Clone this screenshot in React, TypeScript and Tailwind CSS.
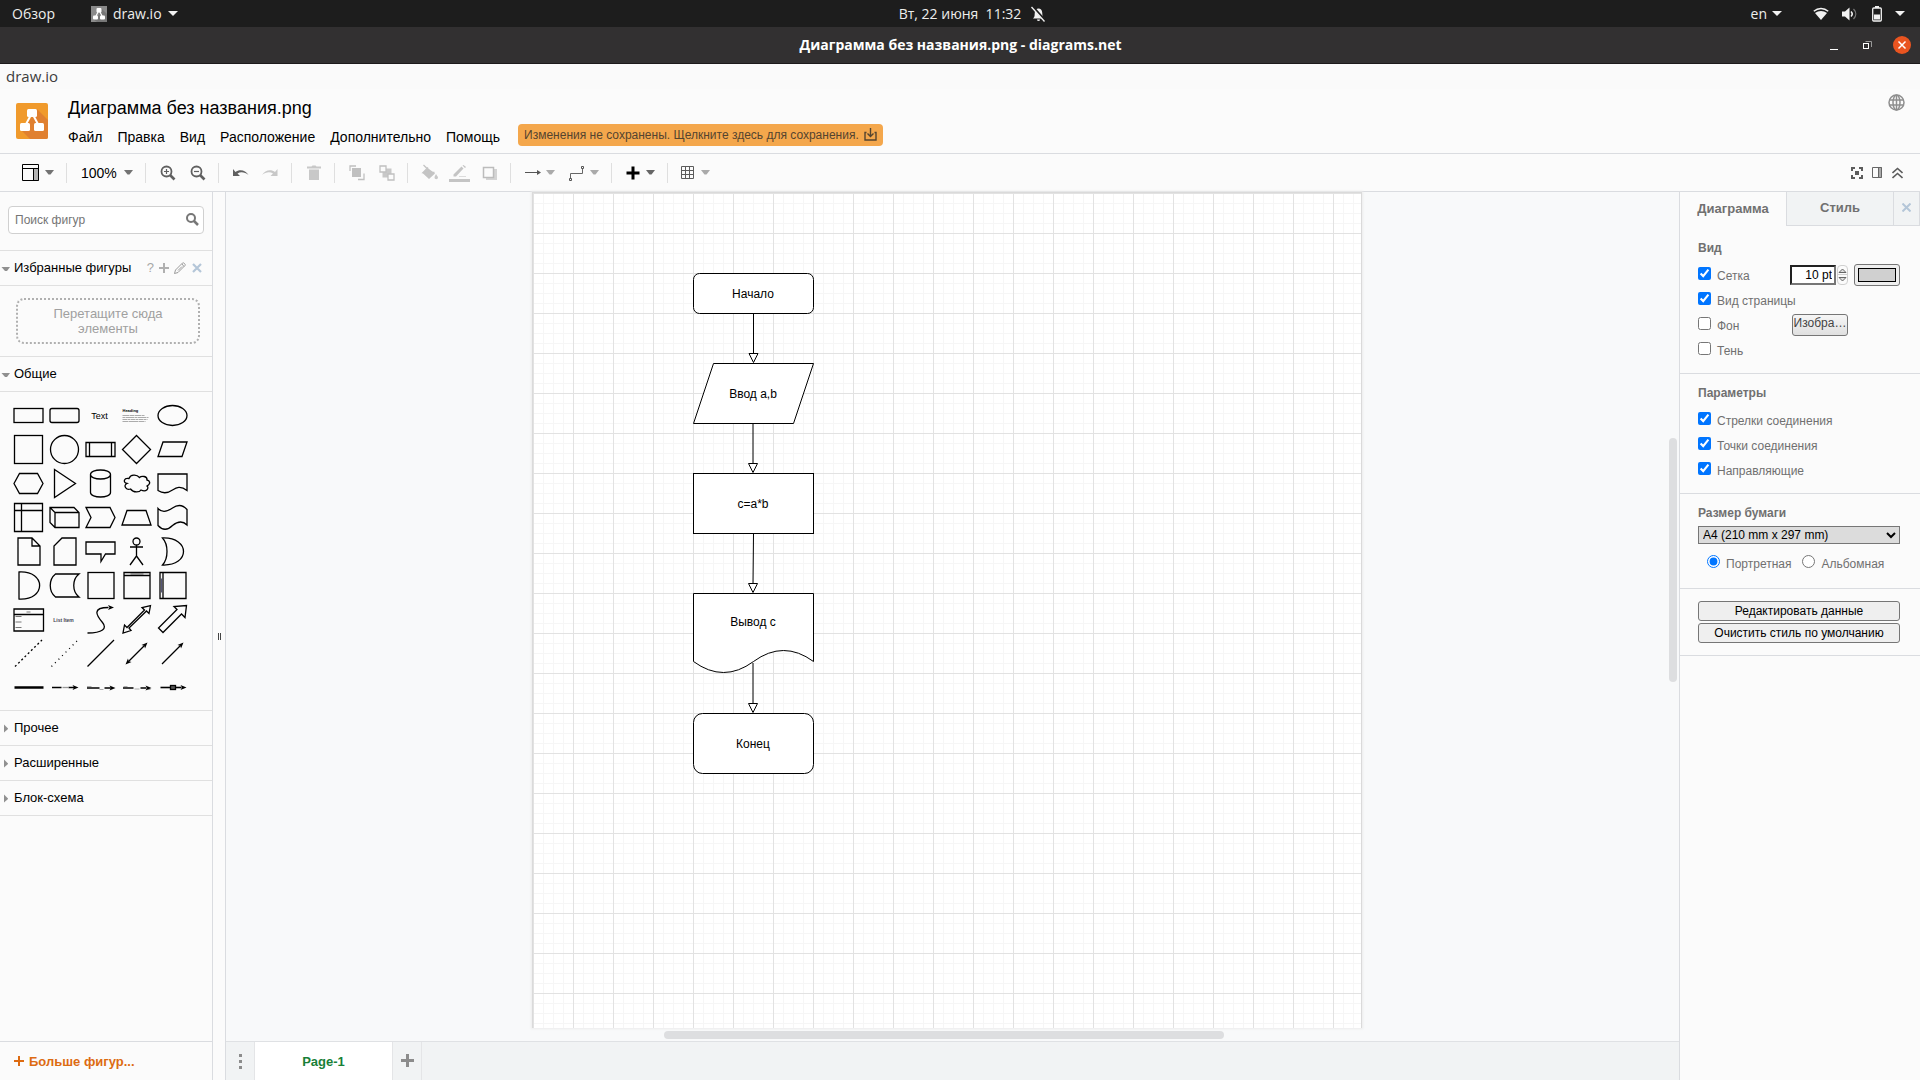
import type { ReactNode } from 'react';

const systemFont = "font-['Open_Sans','Noto_Sans',sans-serif]";

function Caret({ className = 'text-[#737373]' }: { className?: string }) {
  return (
    <svg width="9" height="5" viewBox="0 0 9 5" className={`shrink-0 ${className}`}>
      <path d="M0 0H9L5.5 4.5H3.5Z" fill="currentColor" />
    </svg>
  );
}

function TopCaret() {
  return (
    <svg width="10" height="5" viewBox="0 0 10 5">
      <path d="M0 0H10L5 5Z" fill="#f2f2f2" />
    </svg>
  );
}

function TopBar() {
  return (
    <header className={`flex h-[27px] shrink-0 items-center bg-[#1d1d1d] text-sm text-[#eeeeec] ${systemFont}`}>
      <div className="flex flex-1 items-center px-3">
        <button className="w-[79px] text-left">Обзор</button>
        <button className="flex items-center">
          <svg width="16" height="16" viewBox="0 0 16 16" className="mr-1.5">
            <rect width="16" height="16" fill="#8a8a8a" />
            <path d="M10 2L16 8V16H6L2 13L8 9Z" fill="#777" />
            <path d="M8 4L4 12M8 4L12 12" stroke="#fff" strokeWidth="1.2" />
            <rect x="5.5" y="2" width="5" height="4.5" rx="1" fill="#fff" />
            <rect x="2" y="9.5" width="5" height="4" rx="1" fill="#fff" />
            <rect x="9" y="9.5" width="5" height="4" rx="1" fill="#fff" />
          </svg>
          <span className="mr-1.5">draw.io</span>
          <TopCaret />
        </button>
      </div>
      <button className="flex items-center pl-[25px]">
        <span className="whitespace-pre">Вт, 22 июня  11:32</span>
        <svg width="15" height="16" viewBox="0 0 15 16" className="ml-2.5">
          <path d="M2 12.5C4 11 3.5 9 3.8 6.5C4 4 5.5 2.5 7.5 2.5S11 4 11.2 6.500C11.500 9 11 11 13 12.500ZM6 13.500H9A1.500 1.500 0 0 1 6 13.500Z" fill="#f2f2f2" />
          <path d="M1.500 0.500L14.500 15" stroke="#1d1d1d" strokeWidth="2.500" />
          <path d="M0.500 1L13.500 15.500" stroke="#f2f2f2" strokeWidth="1.300" />
        </svg>
      </button>
      <div className="flex flex-1 items-center justify-end pr-[15px] pl-[9px]">
        <button className="mr-[31px] flex items-center gap-[5px]">
          en
          <TopCaret />
        </button>
        <button className="flex items-center" aria-label="Система">
          <svg width="16" height="14" viewBox="0 0 16 14" className="mr-[13px]">
            <path d="M0.800 4.200C5 0.500 11 0.500 15.200 4.200" stroke="#f2f2f2" strokeWidth="1.500" fill="none" />
            <path d="M2 6C5.500 3.200 10.500 3.200 14 6L8 13Z" fill="#f2f2f2" />
          </svg>
          <svg width="15" height="14" viewBox="0 0 15 14" className="mr-[15px]">
            <path d="M0 4.500H3L7.500 0.500V13.500L3 9.500H0Z" fill="#f2f2f2" />
            <path d="M9 4.500C10.500 6 10.500 8 9 9.500" stroke="#f2f2f2" strokeWidth="1.500" fill="none" />
            <path d="M11.500 2C14.500 5 14.500 9 11.500 12" stroke="#777" strokeWidth="1.300" fill="none" />
          </svg>
          <svg width="10" height="16" viewBox="0 0 10 16" className="mr-[13px]">
            <rect x="3" y="0" width="4" height="2" fill="#f2f2f2" />
            <rect x="0.700" y="2" width="8.600" height="13" rx="1" fill="none" stroke="#f2f2f2" strokeWidth="1.300" />
            <rect x="2" y="8.500" width="6" height="5" fill="#f2f2f2" />
          </svg>
          <TopCaret />
        </button>
      </div>
    </header>
  );
}

function WindowTitle() {
  return (
    <div className={`flex h-[37px] shrink-0 items-center border-b border-[#1c1a1b] bg-[#323031] ${systemFont}`}>
      <div className="flex-1 px-[5px]" />
      <h1 className="text-sm font-bold text-white">Диаграмма без названия.png - diagrams.net</h1>
      <div className="flex flex-1 items-center justify-end pr-[9px]">
        <button aria-label="Свернуть" className="mr-[25px] h-4 w-2">
          <span className="mt-2 block h-px bg-white" />
        </button>
        <button aria-label="Восстановить" className="mr-[21px]">
          <svg width="9" height="9" viewBox="0 0 9 9" fill="none">
            <path d="M2.500 0.500H8.500V6" stroke="#999" />
            <rect x="0.500" y="2.500" width="5" height="5" stroke="#fff" />
          </svg>
        </button>
        <button aria-label="Закрыть">
          <svg width="18" height="18" viewBox="0 0 18 18">
            <circle cx="9" cy="9" r="9" fill="#e95420" />
            <path d="M5.500 5.500L12.500 12.500M12.500 5.500L5.500 12.500" stroke="#fff" strokeWidth="1.500" />
          </svg>
        </button>
      </div>
    </div>
  );
}

const menus = ['Файл', 'Правка', 'Вид', 'Расположение', 'Дополнительно', 'Помощь'];

function AppHeader() {
  return (
    <div className="flex h-16 shrink-0 items-start pl-4">
      <svg width="32" height="36" viewBox="0 0 32 36" className="mt-3.5 shrink-0">
        <rect width="32" height="36" rx="2" fill="#f09a2c" />
        <path d="M21 6L32 17V34A2 2 0 0 1 30 36H14L5 27L13 18Z" fill="#e08030" />
        <path d="M16 10L9 23M16 10L23 23" stroke="#fff" strokeWidth="2" />
        <rect x="11" y="6" width="10" height="8" rx="1.500" fill="#fff" />
        <rect x="4" y="20" width="10" height="8" rx="1.500" fill="#fff" />
        <rect x="18" y="20" width="10" height="8" rx="1.500" fill="#fff" />
      </svg>
      <div className="ml-5 flex-1">
        <div className="mt-2 text-lg leading-[22px] text-black">Диаграмма без названия.png</div>
        <div className="mt-1 flex items-center">
          <nav className="mt-1 flex gap-[15px] text-sm text-black">
            {menus.map((m) => (
              <button key={m}>{m}</button>
            ))}
          </nav>
          <button className="ml-[18px] flex h-[22px] items-center gap-[5px] rounded-sm bg-[#f4a74c] px-1.5 text-xs text-[#54442f]">
            Изменения не сохранены. Щелкните здесь для сохранения.
            <svg width="13" height="13" viewBox="0 0 13 13" fill="none" stroke="currentColor" strokeWidth="1.400" className="mb-px">
              <path d="M2.500 4.500H1V12H12V4.500H10.500M6.500 0V8.500M3.500 5.500L6.500 8.500L9.500 5.500" />
            </svg>
          </button>
        </div>
      </div>
      <button aria-label="Язык" className="mt-[5px] mr-[15px]">
        <svg width="17" height="17" viewBox="0 0 17 17" fill="none" stroke="#8f8f8f" strokeWidth="1.500">
          <circle cx="8.500" cy="8.500" r="7.500" />
          <ellipse cx="8.500" cy="8.500" rx="3.500" ry="7.500" />
          <path d="M1.500 6H15.500M1.500 11H15.500M8.500 1V16" />
        </svg>
      </button>
    </div>
  );
}

function Separator() {
  return <span className="h-5 w-px shrink-0 bg-[#dfdfdf]" />;
}

function IconButton({ label, children }: { label: string; children: ReactNode }) {
  return (
    <button aria-label={label} className="flex h-7 w-[30px] items-center justify-center">
      <svg width="22" height="18" viewBox="-3 -1 22 18" fill="none">
        {children}
      </svg>
    </button>
  );
}

function DropButton({ label, faded, children }: { label: string; faded?: boolean; children: ReactNode }) {
  return (
    <button aria-label={label} className="flex h-7 items-center gap-[5px]">
      <svg width="16" height="16" viewBox="0 0 16 16" fill="none">
        {children}
      </svg>
      <Caret className={faded ? 'text-[#aaaaaa]' : 'text-[#666666]'} />
    </button>
  );
}

function Toolbar() {
  return (
    <div className="flex h-[39px] shrink-0 items-center border-y border-[#dadce0] text-sm text-black">
      <button aria-label="Вид" className="flex items-center gap-[5px] pr-3 pl-[22px]">
        <svg width="18" height="18" viewBox="0 0 18 18" fill="none">
          <path d="M11 5H17V17H11Z" fill="#b4b4b4" />
          <path d="M0.500 0.500H16.500V16.500H0.500ZM0.500 4.500H16.500M11.500 4.500V16.500" stroke="#000" />
        </svg>
        <Caret />
      </button>
      <Separator />
      <button className="flex items-center gap-[7px] pr-3 pl-3.5">
        100% <Caret />
      </button>
      <Separator />
      <div className="flex pr-[5px] pl-[7px]">
        <IconButton label="Увеличить">
          <g stroke="#606060">
            <circle cx="6.500" cy="6.500" r="5" strokeWidth="1.800" />
            <path d="M10 10L14.500 14.500" strokeWidth="2.600" />
            <path d="M4 6.500H9M6.500 4V9" strokeWidth="1.200" />
          </g>
        </IconButton>
        <IconButton label="Уменьшить">
          <g stroke="#606060">
            <circle cx="6.500" cy="6.500" r="5" strokeWidth="1.800" />
            <path d="M10 10L14.500 14.500" strokeWidth="2.600" />
            <path d="M4 6.500H9" strokeWidth="1.200" />
          </g>
        </IconButton>
      </div>
      <Separator />
      <div className="flex pr-[5px] pl-[7px]">
        <IconButton label="Отменить">
          <path d="M0 4L2.500 7C6 4 12.500 4.500 15.500 10C12 7 7.500 6.500 4.500 8.500L7 11H0Z" fill="#606060" />
        </IconButton>
        <IconButton label="Повторить">
          <path d="M14.500 4L12 7C8.500 4 2 4.500 -1 10C2.500 7 7 6.500 10 8.500L7.500 11H14.500Z" fill="#c8c8c8" />
        </IconButton>
      </div>
      <Separator />
      <div className="flex pr-[5px] pl-[7px]">
        <IconButton label="Удалить">
          <path d="M1 1.500H5.500L6.500 0.500H9.500L10.500 1.500H15V3.500H1ZM3 4.500H13V15H3Z" fill="#c8c8c8" />
        </IconButton>
      </div>
      <Separator />
      <div className="flex pr-[5px] pl-[7px]">
        <IconButton label="На передний план">
          <rect x="3" y="3" width="9" height="9" fill="#c0c0c0" />
          <path d="M1 6V1H7M15 8.500V14.500H9" stroke="#c0c0c0" strokeWidth="1.300" />
        </IconButton>
        <IconButton label="На задний план">
          <rect x="3.500" y="3.500" width="9" height="9" fill="#c8c8c8" />
          <path d="M1 1H7V7H1ZM9 9H15V15H9Z" fill="#fbfbfb" stroke="#c0c0c0" strokeWidth="1.300" />
        </IconButton>
      </div>
      <Separator />
      <div className="flex pr-[5px] pl-[7px]">
        <IconButton label="Цвет заливки">
          <path d="M3 1L13 8.500L7 14L0.500 8L6 3" fill="#c4c4c4" />
          <path d="M1.500 0L8 6.500M6 2.500L1 7.500H12.500" stroke="#c4c4c4" strokeWidth="1.300" />
          <path d="M14 9C13 11 12.500 11.500 12.500 12.500A1.700 1.700 0 0 0 16 12.500C16 11.500 15 11 14 9Z" fill="#c8c8c8" />
        </IconButton>
        <IconButton label="Цвет линии">
          <path d="M1.500 9.500L9.500 1.500L11.500 3.500L4 11.500H1.500ZM10.500 0.500L11.500 0L14 2L13 3Z" fill="#c4c4c4" />
          <path d="M7 11.500H14" stroke="#dcdcdc" />
          <rect x="-3" y="14" width="21" height="3" fill="#c4c4c4" />
        </IconButton>
        <IconButton label="Тень">
          <rect x="4" y="4" width="11" height="11" fill="#d4d4d4" />
          <rect x="1.500" y="2.500" width="10" height="10" fill="#fbfbfb" stroke="#bcbcbc" strokeWidth="1.500" />
        </IconButton>
      </div>
      <Separator />
      <div className="flex gap-3.5 pr-3 pl-3.5">
        <DropButton label="Соединение" faded>
          <path d="M0 7.500H14" stroke="#555" />
          <path d="M12 5L16 7.500L12 10Z" fill="#555" />
        </DropButton>
        <DropButton label="Точки пути" faded>
          <path d="M1.500 13V8.500H13.500V4" stroke="#666" />
          <path d="M0.500 13.500H2.500V15.500H0.500ZM12.500 1.500H14.500V3.500H12.500Z" stroke="#555" />
        </DropButton>
      </div>
      <Separator />
      <div className="flex pr-3 pl-[13px]">
        <DropButton label="Вставить">
          <path d="M1.500 8H14.500M8 1.500V14.500" stroke="#000" strokeWidth="3" />
        </DropButton>
      </div>
      <Separator />
      <div className="flex pl-3">
        <DropButton label="Таблица" faded>
          <path d="M1.500 1.500H13.500V13.500H1.500ZM5.500 1.500V13.500M9.500 1.500V13.500M1.500 5.500H13.500M1.500 9.500H13.500" stroke="#5c5c5c" />
        </DropButton>
      </div>
      <div className="mr-[17px] ml-auto flex items-center gap-[9px]">
        <button aria-label="Полный экран">
          <svg width="12" height="12" viewBox="0 0 12 12" fill="none" stroke="#5c5c5c" strokeWidth="2">
            <path d="M1 4V1H4M8 1H11V4M11 8V11H8M4 11H1V8" />
            <rect x="4" y="4" width="4" height="4" fill="#5c5c5c" stroke="none" />
          </svg>
        </button>
        <button aria-label="Панель формата">
          <svg width="11" height="11" viewBox="0 0 11 11" fill="none">
            <path d="M6 0H10V11H6Z" fill="#aaa" />
            <path d="M0.500 0.500H9.500V10.500H0.500ZM6.500 0.500V10.500" stroke="#666" />
          </svg>
        </button>
        <button aria-label="Свернуть панель">
          <svg width="11" height="12" viewBox="0 0 11 12" fill="none" stroke="#5c5c5c" strokeWidth="1.600">
            <path d="M0.500 6L5.500 1.500L10.500 6M0.500 11L5.500 6.500L10.500 11" />
          </svg>
        </button>
      </div>
    </div>
  );
}

const tip = (x: number, y: number, angle: number) => (
  <path d="M0 0L-6 -2.500L-4.500 0L-6 2.500Z" fill="#000" stroke="none" transform={`translate(${x} ${y}) rotate(${angle})`} />
);

const shapes: [string, ReactNode][] = [
  ['Прямоугольник', <rect x="-14.500" y="-7" width="29" height="14" />],
  ['Скруглённый прямоугольник', <rect x="-14.500" y="-7" width="29" height="14" rx="2" />],
  ['Текст', <text x="-1" y="3" fontSize="9" textAnchor="middle" fill="#000" stroke="none">Text</text>],
  [
    'Текстовое поле',
    <g>
      <text x="-14" y="-4" fontSize="4" fontWeight="bold" fill="#000" stroke="none">Heading</text>
      <g stroke="#777" strokeWidth="0.600">
        <path d="M-14 0H8" strokeDasharray="7 0.500 4 0.500" />
        <path d="M-14 2H12" strokeDasharray="3 0.500 8 0.500" />
        <path d="M-14 4H11" strokeDasharray="5 0.500 2 0.500" />
        <path d="M-14 6H9" strokeDasharray="6 0.500 9 0.500" />
      </g>
    </g>,
  ],
  ['Эллипс', <ellipse rx="14.500" ry="10" />],
  ['Квадрат', <rect x="-14" y="-14" width="28" height="28" />],
  ['Круг', <circle r="14" />],
  ['Процесс', <path d="M-14.500 -7H14.500V7H-14.500ZM-11 -7V7M11 -7V7" />],
  ['Ромб', <path d="M0 -14L14 0L0 14L-14 0Z" />],
  ['Параллелограмм', <path d="M-9.500 -7.500H14.500L9.500 7H-14.500Z" />],
  ['Шестиугольник', <path d="M-14.500 0L-9 -10H9L14.500 0L9 10H-9Z" />],
  ['Треугольник', <path d="M-10 -14L11 0L-10 14Z" />],
  ['Цилиндр', <path d="M-10 -9C-10 -15 10 -15 10 -9V9C10 15 -10 15 -10 9ZM-10 -9C-10 -3 10 -3 10 -9" />],
  ['Облако', <path d="M-7.500 -5C-12.500 -6 -14 -1 -9.500 0C-14 2 -10 7 -6 5.500C-3 9.500 3 9 4.500 6.500C10 9 13 4.500 10.500 2.500C15 0 13 -3 10.500 -3.500C11 -7.500 5 -8 3 -6C0 -9.500 -6 -9 -7.500 -5Z" />],
  ['Документ', <path d="M-14.500 -9.500H14.500V7C8 2 4 4 0 6.500C-5 10 -10 10 -14.500 7Z" />],
  ['Внутреннее хранилище', <path d="M-14 -14H14V14H-14ZM-14 -7H14M-7 -14V14" />],
  ['Куб', <path d="M-14.500 -10H9.500L14.500 -5V10H-9.500L-14.500 5ZM-14.500 -10L-9.500 -5V10M-9.500 -5H14.500" />],
  ['Шаг', <path d="M-14.500 -10H9.500L14.500 0L9.500 10H-14.500L-9.500 0Z" />],
  ['Трапеция', <path d="M-9.500 -7H9.500L14.500 7.500H-14.500Z" />],
  ['Лента', <path d="M-14.500 -9C-10 -4 -5 -6 0 -9.500C5 -13 10 -13 14.500 -8V7.500C10 3 5 4 0 8C-5 13 -10 13 -14.500 8Z" />],
  ['Заметка', <path d="M-10.500 -13.500H3.500L11.500 -5.500V13.500H-10.500ZM3.500 -13.500V-5.500H11.500" />],
  ['Карточка', <path d="M-2.500 -13.500H11.500V13.500H-10.500V-5.500Z" />],
  ['Выноска', <path d="M-14.500 -9.500H14.500V2.500H5L0.500 10V2.500H-14.500Z" />],
  ['Актёр', <path d="M0 -13.500A3.500 3.500 0 0 1 0 -6.500A3.500 3.500 0 0 1 0 -13.500M0 -6.500V4.500M-6.500 -4.500H6.500M0 4.500L-6.500 13.500M0 4.500L6.500 13.500" />],
  ['Или', <path d="M-10 -13.500C-4 -7 -4 7 -10 13.500C18 14.500 18 -14.500 -10 -13.500Z" />],
  ['И', <path d="M-9.500 -13.500C18 -15 18 15 -9.500 13.500Z" />],
  ['Хранилище данных', <path d="M-9 -11.500H14.500C7.500 -6 7.500 6 14.500 11.500H-9C-16 6 -16 -6 -9 -11.500Z" />],
  ['Контейнер', <rect x="-12.500" y="-13" width="26" height="26" />],
  [
    'Контейнер с заголовком',
    <g>
      <path d="M-12.500 -13H13.500V13H-12.500ZM-12.500 -10H13.500" />
      <path d="M-6 -11.500H7" strokeWidth="1" stroke="#555" />
    </g>,
  ],
  [
    'Вертикальный контейнер',
    <g>
      <path d="M-12.500 -13H13.500V13H-12.500ZM-9.500 -13V13" />
      <path d="M-11 -7V7" strokeWidth="1" stroke="#557" />
    </g>,
  ],
  [
    'Список',
    <g>
      <path d="M-14.500 -10.500H15V11.500H-14.500ZM-14.500 -5H15" />
      <path d="M-2 -7.500H2M-13 -3H-7M-13 2.500H-7M-13 8H-7" stroke="#555" strokeWidth="0.800" />
    </g>,
  ],
  ['Элемент списка', <text x="-1" y="2" fontSize="5" fontWeight="bold" textAnchor="middle" fill="#445" stroke="none">List Item</text>],
  [
    'Кривая',
    <g>
      <path d="M-13 13.500C2 13.500 7 9 2 3C-4 -4 -9 -12 8 -12" />
      {tip(13.5, -12, 0)}
    </g>,
  ],
  ['Двунаправленная стрелка', <path d="M14 -14L12.500 -6L10 -8.500L-7.500 8.500L-5.500 11L-13.500 13.500L-12 5.500L-9.500 8L8 -9.500L5.500 -12Z" />],
  ['Стрелка', <path d="M14 -14L12.500 -2L9 -5.500L-9.500 13L-14 8.500L4.500 -10L1.500 -13Z" />],
  ['Пунктирная линия', <path d="M-13.500 13L13.500 -13.500" strokeDasharray="2 2.500" />],
  ['Точечная линия', <path d="M-13 13L13 -13" strokeDasharray="1 4" />],
  ['Линия', <path d="M-13 13L13.500 -13.500" />],
  [
    'Двунаправленный соединитель',
    <g>
      <path d="M-8 8L8 -8" />
      {tip(11, -11, -45)}
      {tip(-11, 11, 135)}
    </g>,
  ],
  [
    'Направленный соединитель',
    <g>
      <path d="M-10.500 10.500L8 -8" />
      {tip(11, -11, -45)}
    </g>,
  ],
  ['Связь', <path d="M-14 0H15" strokeWidth="2.500" />],
  [
    'Соединитель с меткой',
    <g>
      <path d="M-12.500 0H-3M4 0H10" strokeWidth="1.600" />
      <path d="M-2 0H4" stroke="#999" />
      {tip(14, 0, 0)}
    </g>,
  ],
  [
    'Соединитель с двумя метками',
    <g>
      <path d="M-13.500 0.500H-1M4 0.500H11" />
      <path d="M-13.500 -1H-9M-1 2H3" stroke="#999" strokeWidth="0.800" />
      {tip(15, 0.5, 0)}
    </g>,
  ],
  [
    'Соединитель с тремя метками',
    <g>
      <path d="M-13.500 0.500H-3M4 0.500H10" />
      <path d="M-13 -1H-9M-2 1.500H3M11 2H14" stroke="#999" strokeWidth="0.800" />
      {tip(15, 0.5, 0)}
    </g>,
  ],
  [
    'Соединитель с символом',
    <g>
      <path d="M-12 0H9" strokeWidth="1.600" />
      <rect x="-2" y="-2" width="5" height="4" fill="#555" />
      {tip(14, 0, 0)}
    </g>,
  ],
];

function SectionHeader({ title, open, children }: { title: string; open?: boolean; children?: ReactNode }) {
  return (
    <div className="flex h-[35px] shrink-0 items-center border-b border-[#e0e0e0] pr-[9px]">
      <button className="flex flex-1 items-center text-[13px] text-black">
        <svg width="14" height="9" viewBox="0 0 14 9">
          <path d={open ? 'M1.500 3H10L7 7H5Z' : 'M4 0.500L8 4.500V5L4 8.500Z'} fill="#909090" />
        </svg>
        {title}
      </button>
      {children}
    </div>
  );
}

function Sidebar() {
  return (
    <aside className="flex w-[213px] shrink-0 flex-col border-r border-[#dadce0]">
      <div className="flex h-[59px] shrink-0 border-b border-[#e0e0e0] px-2 pt-3.5">
        <label className="flex h-7 w-full items-center rounded border border-[#d0d0d0] bg-white pr-1 pb-px pl-1.5">
          <input
            aria-label="Поиск фигур"
            placeholder="Поиск фигур"
            className="min-w-0 flex-1 text-xs outline-none placeholder:text-[#757575]"
          />
          <svg width="13" height="13" viewBox="0 0 13 13" fill="none" stroke="#777">
            <circle cx="5" cy="5" r="4" strokeWidth="2" />
            <path d="M8 8L12 12" strokeWidth="2.500" />
          </svg>
        </label>
      </div>
      <SectionHeader title="Избранные фигуры" open>
        <div className="flex items-center gap-[5px] text-[#a8a8a8]">
          <button className="text-[13px]">?</button>
          <button aria-label="Добавить">
            <svg width="10" height="10" viewBox="0 0 10 10" stroke="#b0b0b0" strokeWidth="2">
              <path d="M0 5H10M5 0V10" />
            </svg>
          </button>
          <button aria-label="Изменить">
            <svg width="12" height="12" viewBox="0 0 12 12" fill="none" stroke="#909090">
              <path d="M0.500 11.500L1.500 8L8.500 1C9.500 0 12 2.500 11 3.500L4 10.500ZM8 2L10 4.500M4 8.500L8 4.500" strokeWidth="0.900" />
            </svg>
          </button>
          <button aria-label="Закрыть">
            <svg width="12" height="10" viewBox="-1 0 12 10" stroke="#b4c6d8" strokeWidth="2.200">
              <path d="M1 1L9 9M9 1L1 9" />
            </svg>
          </button>
        </div>
      </SectionHeader>
      <div className="h-[71px] shrink-0 border-b border-[#e0e0e0] pt-3 pr-3 pl-4">
        <div className="flex h-[46px] items-center justify-center rounded-lg border-2 border-dotted border-[#b0b0b0] px-8 text-center text-[13px] leading-[15px] text-[#a0a0a0]">
          Перетащите сюда элементы
        </div>
      </div>
      <SectionHeader title="Общие" open />
      <div className="grid shrink-0 grid-cols-[repeat(5,36px)] border-b border-[#e0e0e0] px-2.5 pt-1.5 pb-1.5">
        {shapes.map(([label, drawing]) => (
          <button key={label} aria-label={label} className="h-[34px]">
            <svg width="36" height="34" viewBox="-18.500 -17.500 36 34" fill="none" stroke="#000" strokeWidth="1.300">
              {drawing}
            </svg>
          </button>
        ))}
      </div>
      <SectionHeader title="Прочее" />
      <SectionHeader title="Расширенные" />
      <SectionHeader title="Блок-схема" />
      <div className="mt-auto h-[39px] shrink-0 border-t border-[#dadce0]">
        <button className="flex h-full items-center gap-[5px] pl-3.5 text-[13px] font-bold text-[#dd6b12]">
          <svg width="10" height="10" viewBox="0 0 10 10" stroke="currentColor" strokeWidth="2" className="mb-px">
            <path d="M0 5H10M5 0V10" />
          </svg>
          <span className="pt-0.5">Больше фигур...</span>
        </button>
      </div>
    </aside>
  );
}

function Diagram() {
  return (
    <svg className="h-full w-full text-xs" fill="none" stroke="#000">
      <defs>
        <pattern id="grid" width="40" height="40" patternUnits="userSpaceOnUse">
          <path d="M10.500 0V40M20.500 0V40M30.500 0V40M0 10.500H40M0 20.500H40M0 30.500H40" stroke="#f6f6f6" />
          <path d="M0.500 0V40M0 0.500H40" stroke="#e2e2e2" />
        </pattern>
      </defs>
      <rect width="100%" height="100%" fill="url(#grid)" stroke="none" />
      <g fill="#fff">
        <rect x="160.500" y="80.500" width="120" height="40" rx="6" />
        <path d="M180.500 170.500H280.500L260.500 230.500H160.500Z" />
        <rect x="160.500" y="280.500" width="120" height="60" />
        <path d="M160.500 400.500H280.500V468.500Q250.500 446.500 220.500 468.500Q190.500 490.500 160.500 468.500Z" />
        <rect x="160.500" y="520.500" width="120" height="60" rx="9" />
        <path d="M220.500 120.500V160.500M216 160.500H225L220.500 169.500Z" />
        <path d="M215.500 270.500H224.500L220 279.500Z" />
        <path d="M220.500 340.500L220 390.500M215.500 390.500H224.500L220 399.500Z" />
        <path d="M215.500 510.500H224.500L220 519.500Z" />
      </g>
      <path d="M220 230.500V270.500M220 470V510.500" />
      <g fill="#000" stroke="none" textAnchor="middle">
        <text x="220" y="105">Начало</text>
        <text x="220" y="205">Ввод a,b</text>
        <text x="220" y="315">c=a*b</text>
        <text x="220" y="433">Вывод c</text>
        <text x="220" y="555">Конец</text>
      </g>
    </svg>
  );
}

function Canvas() {
  return (
    <main className="flex min-w-0 flex-1 flex-col border-l border-[#dadce0] bg-[#f8f9fa]">
      <div className="flex min-h-0 flex-1">
        <div className="flex min-w-0 flex-1 justify-center">
          <div className="w-[830px] border border-b-0 border-[#dadada] bg-white shadow-[0_0_2px_1px_#ececec]">
            <Diagram />
          </div>
        </div>
        <div className="flex w-[11px] flex-col pl-px">
          <div className="flex-[246]" />
          <div className="w-2 flex-[244] rounded-full bg-[#dddee0]" />
          <div className="flex-[346]" />
        </div>
      </div>
      <div className="flex h-[13px] shrink-0 pt-[3px]">
        <div className="flex-[438]" />
        <div className="h-2 flex-[560] rounded-full bg-[#dddee0]" />
        <div className="flex-[455]" />
      </div>
      <div className="flex h-[39px] shrink-0 border-t border-[#dfe1e4] bg-[#f1f3f4]">
        <button aria-label="Страницы" className="flex w-[29px] flex-col items-center justify-center gap-[3px] border-r border-[#e4e5e7]">
          <span className="size-[3px] bg-[#8c8c8c]" />
          <span className="size-[3px] bg-[#8c8c8c]" />
          <span className="size-[3px] bg-[#8c8c8c]" />
        </button>
        <button className="w-[138px] border-r border-[#e4e5e7] bg-white pt-0.5 text-[13px] font-bold text-[#188038]">Page-1</button>
        <button aria-label="Вставить страницу" className="flex w-[29px] items-center justify-center border-r border-[#e4e5e7] pb-0.5">
          <svg width="13" height="13" viewBox="0 0 13 13" stroke="#8c8c8c" strokeWidth="3">
            <path d="M0 6.500H13M6.500 0V13" />
          </svg>
        </button>
      </div>
    </main>
  );
}

function Check({ label, checked }: { label: string; checked?: boolean }) {
  return (
    <label className="flex h-[25px] items-start">
      <input type="checkbox" defaultChecked={checked} className="size-[13px] shrink-0" />
      <span className="mt-0.5 ml-1.5 leading-[14px] whitespace-nowrap">{label}</span>
    </label>
  );
}

function FormatPanel() {
  return (
    <aside className="flex w-[241px] shrink-0 flex-col border-l border-[#dadce0] text-xs text-[#707070]">
      <div className="flex h-[34px] shrink-0 text-[13px] font-bold">
        <button className="w-[106px]">Диаграмма</button>
        <button className="flex-1 border-b border-l border-[#dadce0] bg-[#f1f3f4] pb-px">Стиль</button>
        <button aria-label="Закрыть" className="flex w-[27px] items-center justify-center border-x border-b border-[#dadce0] bg-[#f1f3f4] pb-0.5">
          <svg width="9" height="9" viewBox="0 0 9 9" stroke="#b4c6d8" strokeWidth="2">
            <path d="M0.500 0.500L8.500 8.500M8.500 0.500L0.500 8.500" />
          </svg>
        </button>
      </div>
      <section className="h-[148px] shrink-0 border-b border-[#dadce0] px-[18px] pt-3.5">
        <h2 className="mb-[11px] leading-4 font-bold">Вид</h2>
        <div className="flex">
          <div className="w-[92px] shrink-0">
            <Check label="Сетка" checked />
            <Check label="Вид страницы" checked />
            <Check label="Фон" />
            <Check label="Тень" />
          </div>
          <div className="-mt-[3px] w-[110px]">
            <div className="mb-7 flex items-center">
              <input
                aria-label="Размер сетки"
                defaultValue="10 pt"
                className="h-5 w-[46px] border-2 border-t-[#222] border-r-[#767676] border-b-[#767676] border-l-[#222] bg-white pr-0.5 text-right text-black"
              />
              <div className="mr-1.5 ml-px flex w-[11px] flex-col overflow-hidden rounded-sm border border-[#d0d0d0]">
                <button aria-label="Больше" className="flex h-[9px] items-center justify-center border-b border-[#d0d0d0]">
                  <svg width="9" height="5" viewBox="0 0 9 5" fill="#ddd" stroke="#666">
                    <path d="M1 4.500L4.500 1L8 4.500Z" />
                  </svg>
                </button>
                <button aria-label="Меньше" className="flex h-[9px] items-center justify-center">
                  <svg width="9" height="5" viewBox="0 0 9 5" fill="#ddd" stroke="#666">
                    <path d="M1 0.500L4.500 4L8 0.500Z" />
                  </svg>
                </button>
              </div>
              <button aria-label="Цвет сетки" className="h-[22px] w-[46px] rounded-[3px] border border-[#767676] bg-[#efefef] p-[3px]">
                <span className="block h-full border border-black bg-[#d0d0d0]" />
              </button>
            </div>
            <button className="ml-0.5 flex h-[22px] w-14 justify-center rounded-[3px] border border-[#767676] bg-linear-to-b from-[#f6f6f6] to-[#e0e0e0] text-[#444]">
              <span className="leading-[17px]">Изобра…</span>
            </button>
          </div>
        </div>
      </section>
      <section className="h-[120px] shrink-0 border-b border-[#dadce0] px-[18px] pt-[11px]">
        <h2 className="mb-[11px] leading-4 font-bold">Параметры</h2>
        <Check label="Стрелки соединения" checked />
        <Check label="Точки соединения" checked />
        <Check label="Направляющие" checked />
      </section>
      <section className="h-[95px] shrink-0 border-b border-[#dadce0] px-[18px] pt-[11px]">
        <h2 className="mb-[5px] leading-4 font-bold">Размер бумаги</h2>
        <select aria-label="Размер бумаги" className="h-[18px] w-[202px] border border-[#767676] bg-[#dcdcdc] text-black">
          <option>A4 (210 mm x 297 mm)</option>
        </select>
        <div className="mt-[11px] flex pl-[9px]">
          <label className="mr-[11px] flex items-start">
            <input type="radio" name="orientation" defaultChecked className="size-[13px]" />
            <span className="mt-0.5 ml-1.5 leading-[14px]">Портретная</span>
          </label>
          <label className="flex items-start">
            <input type="radio" name="orientation" className="size-[13px]" />
            <span className="mt-0.5 ml-1.5 leading-[14px]">Альбомная</span>
          </label>
        </div>
      </section>
      <section className="flex h-[67px] shrink-0 flex-col gap-0.5 border-b border-[#dadce0] pt-3 pr-5 pl-[18px] text-black">
        <button className="h-5 rounded-[3px] border border-[#767676] bg-[#efefef]">Редактировать данные</button>
        <button className="h-5 rounded-[3px] border border-[#767676] bg-[#efefef]">Очистить стиль по умолчанию</button>
      </section>
    </aside>
  );
}

export default function App() {
  return (
    <div className="flex h-screen flex-col overflow-hidden bg-[#fbfbfb] font-['Liberation_Sans',Arial,sans-serif]">
      <TopBar />
      <WindowTitle />
      <div className={`h-[25px] shrink-0 bg-[#fafafa] pl-1.5 text-[15px] leading-[25px] text-[#3d3d3d] ${systemFont}`}>draw.io</div>
      <AppHeader />
      <Toolbar />
      <div className="flex min-h-0 flex-1">
        <Sidebar />
        <div className="flex w-3 shrink-0 items-center justify-center gap-px pl-px">
          <span className="h-[7px] w-px bg-[#444]" />
          <span className="h-[7px] w-px bg-[#444]" />
        </div>
        <Canvas />
        <FormatPanel />
      </div>
    </div>
  );
}
